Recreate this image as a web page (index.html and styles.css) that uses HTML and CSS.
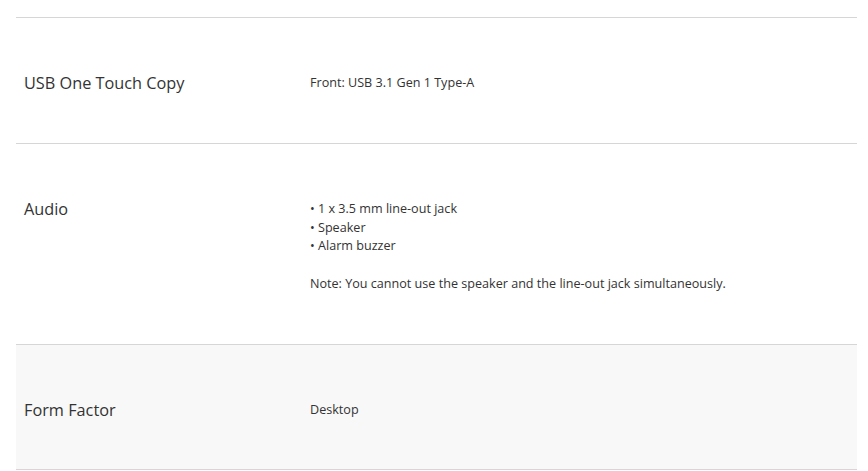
FILE: index.html
```html
<!DOCTYPE html>
<html lang="en">
<head>
<meta charset="utf-8">
<title>Specifications</title>
<link rel="stylesheet" href="styles.css">
</head>
<body>
<div class="specs">
  <div class="row">
    <div class="label">USB One Touch Copy</div>
    <div class="value">Front: USB 3.1 Gen 1 Type-A</div>
  </div>
  <div class="row">
    <div class="label">Audio</div>
    <div class="value">
      <div>• 1 x 3.5 mm line-out jack</div>
      <div>• Speaker</div>
      <div>• Alarm buzzer</div>
      <div class="note">Note: You cannot use the speaker and the line-out jack simultaneously.</div>
    </div>
  </div>
  <div class="row alt">
    <div class="label">Form Factor</div>
    <div class="value">Desktop</div>
  </div>
</div>
</body>
</html>
```

FILE: styles.css
```css
html, body {
  margin: 0;
  padding: 0;
  background: #ffffff;
}
body {
  font-family: "Open Sans", "DejaVu Sans", sans-serif;
  color: #333333;
}
.specs {
  padding: 17px 11px 0 16px;
}
.row {
  display: grid;
  grid-template-columns: 286px 1fr;
  padding: 56px 8px 50px 8px;
  border-top: 1px solid #d6d6d6;
  line-height: 18.75px;
}
.row:last-child {
  border-bottom: 1px solid #d6d6d6;
}
.row.alt {
  background: #f8f8f8;
}
.label {
  font-size: 16.3px;
  color: #333333;
}
.value {
  font-size: 12.6px;
  color: #333333;
}
.note {
  margin-top: 18.75px;
}
```
